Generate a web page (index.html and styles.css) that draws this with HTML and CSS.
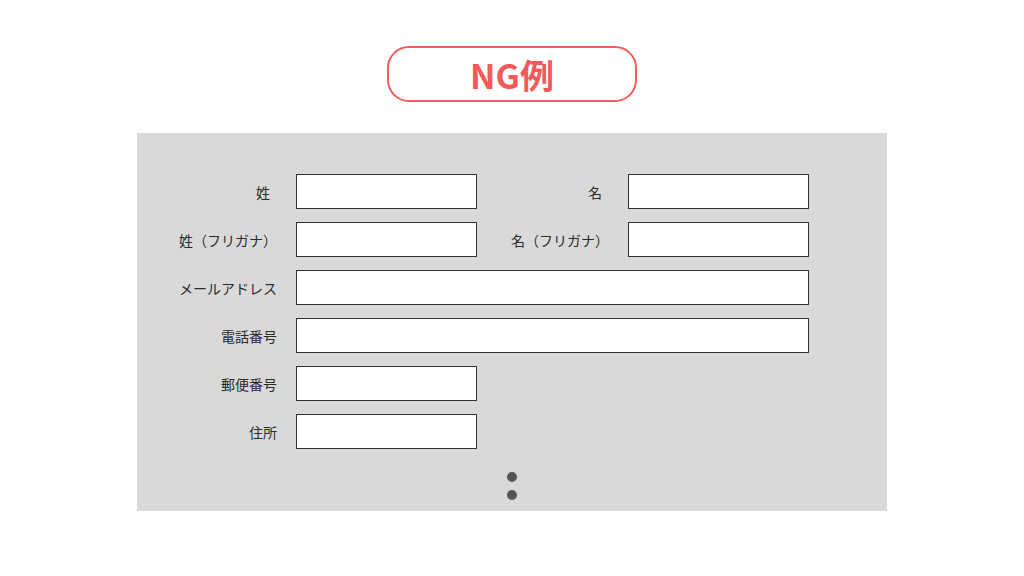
FILE: index.html
```html
<!DOCTYPE html>
<html lang="ja">
<head>
  <meta charset="UTF-8" />
  <title>NG例</title>
  <link rel="stylesheet" href="styles.css">
</head>
<body>
  <div class="title-wrap">
    <h2 class="title">NG例</h2>
  </div>

  <div class="panel">
    <form class="form">
      <label for="sei" class="short">姓</label>
      <input type="text" id="sei" />
      <label for="mei" class="short">名</label>
      <input type="text" id="mei" />

      <label for="sei-kana">姓（フリガナ）</label>
      <input type="text" id="sei-kana" />
      <label for="mei-kana">名（フリガナ）</label>
      <input type="text" id="mei-kana" />

      <label for="email">メールアドレス</label>
      <input type="text" id="email" class="wide" />

      <label for="tel">電話番号</label>
      <input type="text" id="tel" class="wide" />

      <label for="zip">郵便番号</label>
      <input type="text" id="zip" />
      <span class="spacer"></span>

      <label for="address">住所</label>
      <input type="text" id="address" />
      <span class="spacer"></span>
    </form>

    <div class="more">
      <span class="dot"></span>
      <span class="dot"></span>
    </div>
  </div>
</body>
</html>
```

FILE: styles.css
```css
body {
  margin: 0;
  background: #fff;
  font-family: "Noto Sans CJK JP", "Noto Sans", sans-serif;
  color: #333;
}

.title-wrap {
  display: flex;
  justify-content: center;
  padding-top: 46px;
}

.title {
  margin: 0;
  width: 250px;
  height: 56px;
  box-sizing: border-box;
  border: 2px solid #f25c5c;
  border-radius: 22px;
  display: flex;
  align-items: center;
  justify-content: center;
  font-size: 34px;
  font-weight: bold;
  color: #f25a5a;
}

.panel {
  width: 750px;
  margin: 31px auto 0;
  background: #d9d9d9;
  box-sizing: border-box;
  padding: 41px 0 11px;
}

.form {
  display: grid;
  grid-template-columns: 140px 181px 113px 181px;
  grid-auto-rows: 35px;
  column-gap: 19px;
  row-gap: 13px;
  align-items: center;
}

label {
  text-align: right;
  font-size: 14px;
  color: #2b2b2b;
  white-space: nowrap;
}

label.short {
  padding-right: 7px;
}

input {
  width: 100%;
  height: 35px;
  box-sizing: border-box;
  margin: 0;
  border: 1px solid #333;
  border-radius: 0;
  background: #fff;
  padding: 0 8px;
}

input.wide {
  grid-column: 2 / 5;
}

.spacer {
  grid-column: 3 / 5;
}

.more {
  display: flex;
  flex-direction: column;
  align-items: center;
  gap: 8px;
  margin-top: 23px;
}

.dot {
  width: 10px;
  height: 10px;
  border-radius: 50%;
  background: #555;
}
```
